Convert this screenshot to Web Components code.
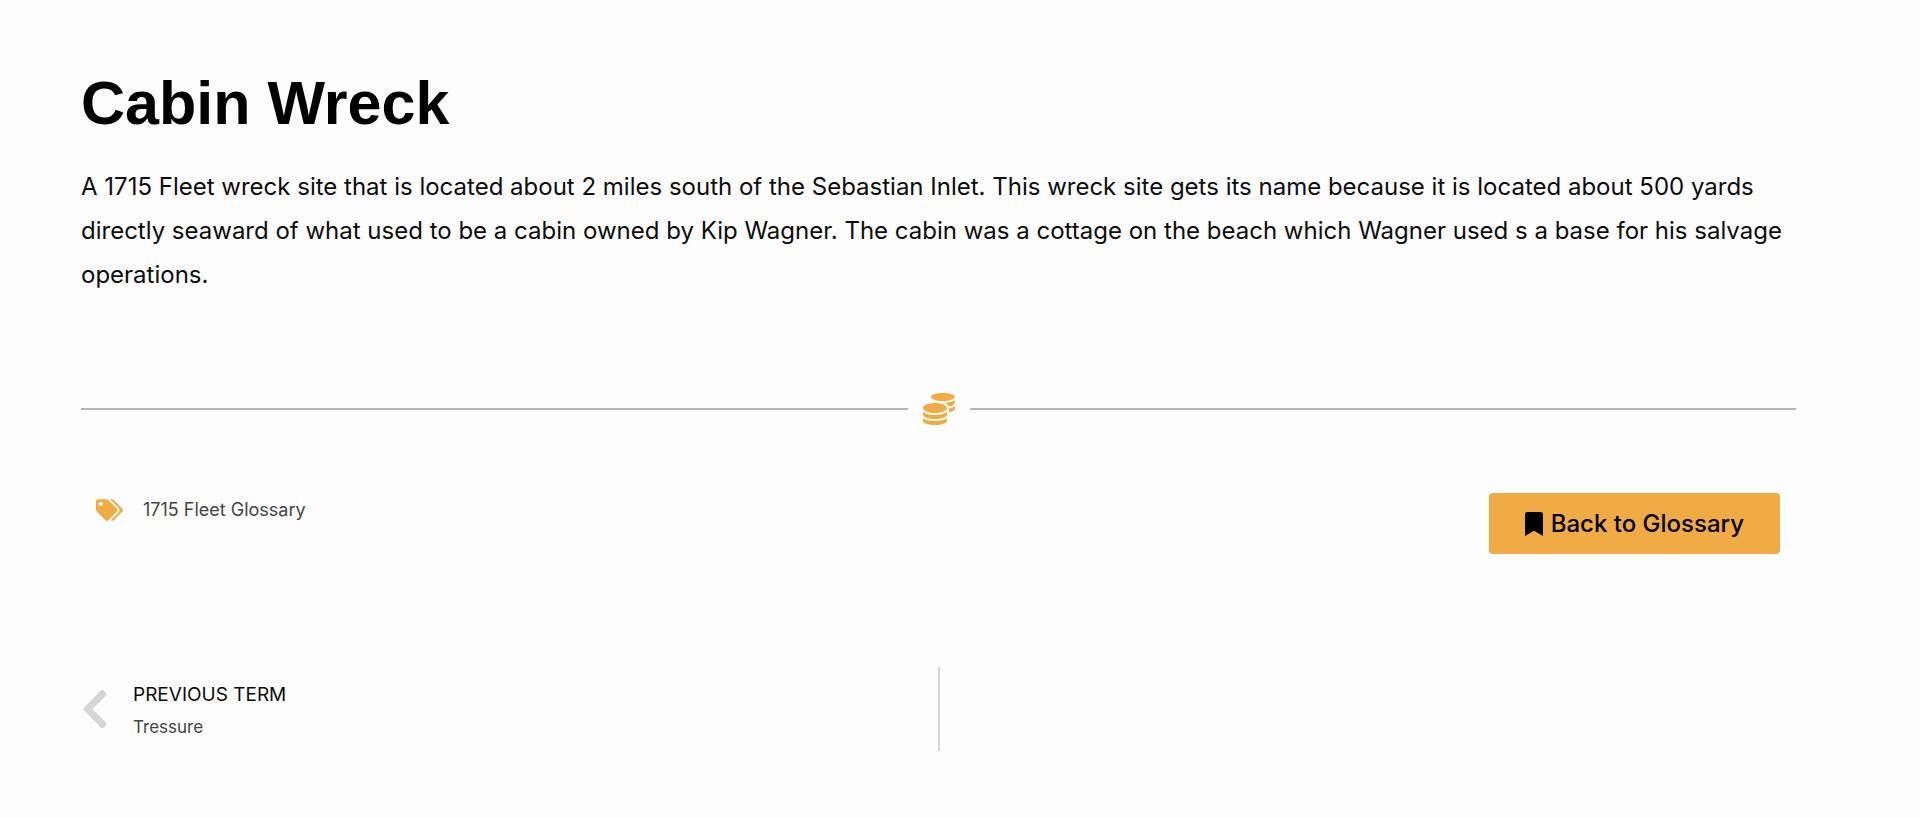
<!DOCTYPE html>
<html lang="en">
<head>
<meta charset="utf-8">
<meta name="viewport" content="width=device-width, initial-scale=1">
<title>Cabin Wreck</title>
<style>
body { margin: 0; background: #fdfdfd; color: #0c0c0c; font-family: Inter, "Liberation Sans", sans-serif; }
</style>
</head>
<body>
<glossary-page>
  <glossary-entry>
    <span slot="title">Cabin Wreck</span>
    A 1715 Fleet wreck site that is located about 2 miles south of the Sebastian Inlet. This wreck site gets its name because it is located about 500 yards directly seaward of what used to be a cabin owned by Kip Wagner. The cabin was a cottage on the beach which Wagner used s a base for his salvage operations.
  </glossary-entry>
  <coin-divider></coin-divider>
  <entry-meta>
    <term-tag>1715 Fleet Glossary</term-tag>
    <back-button slot="action">Back to Glossary</back-button>
  </entry-meta>
  <term-navigation><span slot="label">PREVIOUS TERM</span><span slot="term">Tressure</span></term-navigation>
</glossary-page>
<script>
const define = (name, html) => customElements.define(name, class extends HTMLElement {
  constructor() {
    super();
    this.attachShadow({ mode: "open" }).innerHTML = html;
  }
});

define("glossary-page", `
<style>
:host { display: block; }
main { padding: 68px 124px 62px 81px; }
</style>
<main><slot></slot></main>`);

define("glossary-entry", `
<style>
:host { display: block; }
h1 { margin: 0; color: #000; font: bold 61px/70px "Liberation Sans", Arial, sans-serif; }
p { margin: 27px 0 0; font-size: 24px; line-height: 44px; }
</style>
<h1><slot name="title"></slot></h1>
<p><slot></slot></p>`);

define("coin-divider", `
<style>
:host { display: flex; align-items: center; gap: 15px; margin-top: 96px; }
:host::before, :host::after { content: ""; flex: 1; height: 2px; background: #b4b4b4; }
svg { display: block; width: 32px; height: 32px; fill: #f0ab45; }
</style>
<svg viewBox="0 0 512 512" aria-hidden="true"><path d="M0 405.3V448c0 35.3 86 64 192 64s192-28.7 192-64v-42.7C342.7 434.4 267.2 448 192 448S41.3 434.4 0 405.3zM320 128c106 0 192-28.7 192-64S426 0 320 0 128 28.7 128 64s86 64 192 64zM0 300.4V352c0 35.3 86 64 192 64s192-28.7 192-64v-51.6c-41.3 34-116.9 51.6-192 51.6S41.3 334.4 0 300.4zm416 11c57.3-11.1 96-31.7 96-55.4v-42.7c-23.2 16.4-57.3 27.6-96 34.1v64.1zM192 160C86 160 0 195.8 0 240s86 80 192 80 192-35.8 192-80-86-80-192-80zm219.3 56.3c60-10.8 100.7-32 100.7-56.3v-42.7c-35.5 25.1-96.5 38.6-160.7 41.8 29.5 14.3 51.2 33.5 60 57.2z"/></svg>`);

define("entry-meta", `
<style>
:host { display: flex; justify-content: space-between; align-items: flex-start; margin-top: 68px; padding: 0 16px 0 15px; }
</style>
<slot></slot><slot name="action"></slot>`);

define("term-tag", `
<style>
:host { display: block; }
a { display: flex; align-items: center; gap: 20px; color: #444; font-size: 18px; line-height: 33px; text-decoration: none; }
svg { width: 27px; height: 22px; fill: #f0ab45; }
</style>
<a href="#glossary"><svg viewBox="0 0 640 512" aria-hidden="true"><path d="M497.941 225.941L286.059 14.059A48 48 0 0 0 252.118 0H48C21.49 0 0 21.49 0 48v204.118a48 48 0 0 0 14.059 33.941l211.882 211.882c18.744 18.745 49.136 18.746 67.882 0l204.118-204.118c18.745-18.745 18.745-49.137 0-67.882zM112 160c-26.51 0-48-21.49-48-48s21.49-48 48-48 48 21.49 48 48-21.49 48-48 48zm513.941 133.823L421.823 497.941c-18.745 18.745-49.137 18.745-67.882 0l-.36-.36L527.64 323.522c16.999-16.999 26.362-39.6 26.362-63.64s-9.362-46.641-26.362-63.64L331.397 0h48.721a48 48 0 0 1 33.941 14.059l211.882 211.882c18.745 18.745 18.745 49.137 0 67.882z"/></svg><span><slot></slot></span></a>`);

define("back-button", `
<style>
:host { display: block; }
button { display: flex; align-items: center; gap: 8px; padding: 0 36px; border: 0; border-radius: 4px; background: #f0ab45; color: #000; font: 500 24px/61px Inter, "Liberation Sans", sans-serif; cursor: pointer; }
svg { width: 18px; height: 24px; }
</style>
<button type="button"><svg viewBox="0 0 384 512" aria-hidden="true"><path d="M0 512V48C0 21.49 21.49 0 48 0h288c26.51 0 48 21.49 48 48v464L192 400 0 512z"/></svg><span><slot></slot></span></button>`);

define("term-navigation", `
<style>
:host { display: block; margin-top: 113px; }
nav { display: grid; grid-template-columns: 1fr 2px 1fr; min-height: 84px; }
nav::after { content: ""; grid-column: 2; background: #d5d5d5; }
a { display: flex; grid-column: 1; align-items: center; gap: 26px; padding-left: 2px; color: inherit; text-decoration: none; }
svg { width: 24px; height: 40px; fill: #d5d5d5; }
span { display: block; line-height: 33px; }
.text { padding-top: 4px; }
.label { font-size: 19px; }
.term { color: #444; font-size: 17px; }
</style>
<nav aria-label="Terms"><a href="#tressure"><svg viewBox="0 0 24 40" aria-hidden="true"><path d="M.6 18.9 18 1.300q1.200-1.200 2.400 0l2.600 2.700q1.200 1.200 0 2.400L9.500 20 23 33.600q1.200 1.200 0 2.400l-2.600 2.700q-1.200 1.200-2.400 0L.6 21.100q-1.100-1.100 0-2.200z"/></svg><span class="text"><span class="label"><slot name="label"></slot></span><span class="term"><slot name="term"></slot></span></span></a></nav>`);
</script>
</body>
</html>
